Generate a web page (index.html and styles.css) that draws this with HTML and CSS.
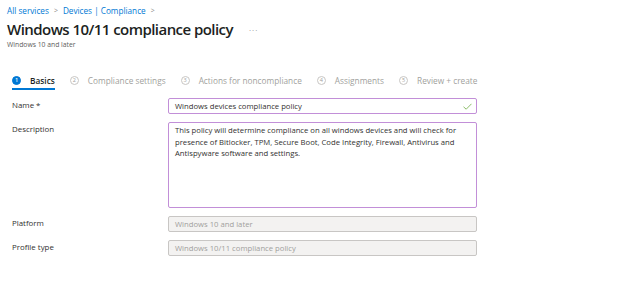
FILE: index.html
```html
<!DOCTYPE html>
<html lang="en">
<head>
    <meta charset="UTF-8">
    <title>Windows 10/11 compliance policy</title>
    <link rel="stylesheet" href="styles.css">
</head>
<body>
    <header class="page-header">
        <nav class="breadcrumb">
            <a href="#">All services</a>
            <span class="sep">&gt;</span>
            <a href="#">Devices | Compliance</a>
            <span class="sep">&gt;</span>
        </nav>
        <div class="title-row">
            <h1>Windows 10/11 compliance policy</h1>
            <span class="more">&middot;&middot;&middot;</span>
        </div>
        <p class="subtitle">Windows 10 and later</p>
    </header>

    <ul class="wizard-tabs">
        <li class="tab active"><span class="step">1</span>Basics</li>
        <li class="tab"><span class="step">2</span>Compliance settings</li>
        <li class="tab"><span class="step">3</span>Actions for noncompliance</li>
        <li class="tab"><span class="step">4</span>Assignments</li>
        <li class="tab"><span class="step">5</span>Review + create</li>
    </ul>

    <form class="policy-form">
        <div class="form-row">
            <label>Name *</label>
            <div class="field valid">
                <span>Windows devices compliance policy</span>
                <svg class="check" width="9" height="7" viewBox="0 0 9 7"><path d="M0.5 3.8 L3.2 6.2 L8.5 0.8" fill="none" stroke="#8cbd6a" stroke-width="1"/></svg>
            </div>
        </div>
        <div class="form-row">
            <label>Description</label>
            <div class="field textarea">This policy will determine compliance on all windows devices and will check for presence of Bitlocker, TPM, Secure Boot, Code Integrity, Firewall, Antivirus and Antispyware software and settings.</div>
        </div>
        <div class="form-row">
            <label>Platform</label>
            <div class="field disabled">Windows 10 and later</div>
        </div>
        <div class="form-row">
            <label>Profile type</label>
            <div class="field disabled">Windows 10/11 compliance policy</div>
        </div>
    </form>
</body>
</html>
```

FILE: styles.css
```css
* {
    margin: 0;
    padding: 0;
    box-sizing: border-box;
}

body {
    font-family: 'Open Sans', 'Noto Sans', sans-serif;
    color: #323130;
    background: #fff;
    width: 624px;
    height: 296px;
    overflow: hidden;
}

/* header */
.page-header {
    padding: 3px 0 0 7px;
}

.breadcrumb {
    display: flex;
    align-items: center;
    gap: 5px;
    font-size: 8.2px;
    height: 14px;
}

.breadcrumb a {
    color: #0078d4;
    text-decoration: none;
}

.breadcrumb .sep {
    color: #8a8886;
    font-size: 7px;
}

.title-row {
    display: flex;
    align-items: center;
    margin-top: 2px;
    height: 20px;
}

.title-row h1 {
    font-size: 15px;
    font-weight: 600;
    color: #201f1e;
    letter-spacing: -0.55px;
}

.more {
    margin-left: 16px;
    font-size: 8px;
    color: #8a8886;
    letter-spacing: 1px;
}

.subtitle {
    font-size: 6.8px;
    color: #605e5c;
    margin-top: 1px;
}

/* wizard tabs */
.wizard-tabs {
    display: flex;
    list-style: none;
    gap: 15px;
    margin: 22px 0 0 12px;
}

.tab {
    display: flex;
    align-items: center;
    gap: 9px;
    font-size: 8.3px;
    color: #a19f9d;
    height: 18px;
    position: relative;
}

.step {
    width: 9px;
    height: 9px;
    border: 1px solid #c8c6c4;
    border-radius: 50%;
    font-size: 5.5px;
    display: flex;
    align-items: center;
    justify-content: center;
    color: #a19f9d;
}

.tab.active {
    color: #201f1e;
    font-weight: 600;
}

.tab.active .step {
    background: #0078d4;
    border-color: #0078d4;
    color: #fff;
}

.tab.active::after {
    content: '';
    position: absolute;
    left: 0;
    right: 0;
    bottom: -1px;
    height: 2px;
    background: #0078d4;
}

/* form */
.policy-form {
    margin-top: 9px;
    display: flex;
    flex-direction: column;
    gap: 8px;
}

.form-row {
    display: flex;
    align-items: flex-start;
    padding-left: 12px;
}

.form-row label {
    width: 156px;
    font-size: 7.9px;
    color: #323130;
    line-height: 15px;
}

.field {
    width: 309px;
    height: 16px;
    border: 1px solid #c28fd8;
    border-radius: 2px;
    font-size: 7.7px;
    line-height: 14px;
    padding: 0 6px;
    color: #323130;
    display: flex;
    justify-content: space-between;
    align-items: center;
}

.field .check {
    margin-right: -2px;
}

.field.textarea {
    display: block;
    height: 86px;
    line-height: 11.5px;
    padding-top: 2px;
}

.field.disabled {
    background: #f3f2f1;
    border-color: #c8c6c4;
    color: #a19f9d;
    display: block;
}
```
